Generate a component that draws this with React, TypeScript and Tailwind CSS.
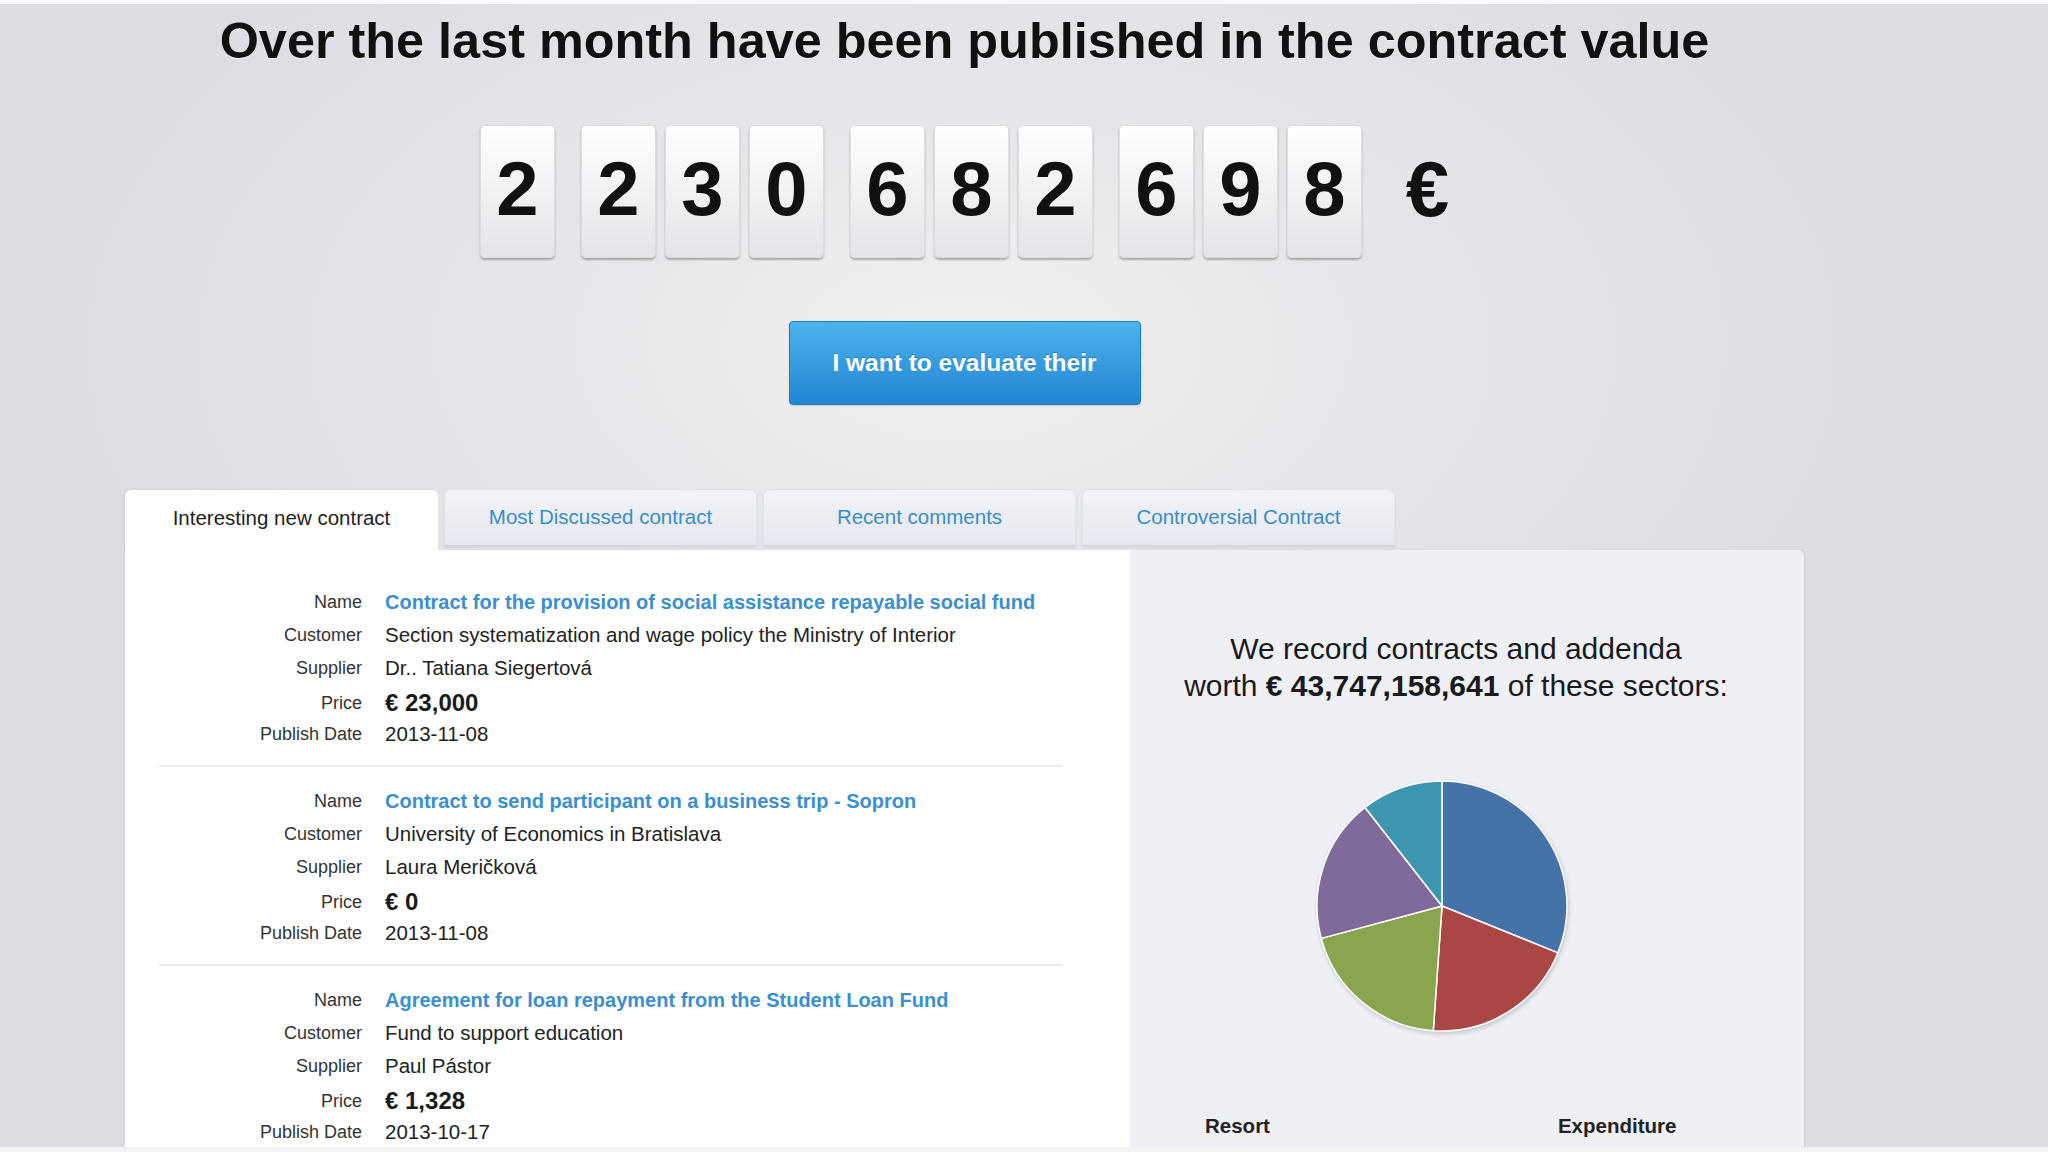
import React from "react";

const digitGroups = [["2"], ["2", "3", "0"], ["6", "8", "2"], ["6", "9", "8"]];

type Contract = {
  name: string;
  customer: string;
  supplier: string;
  price: string;
  date: string;
};

const contracts: Contract[] = [
  {
    name: "Contract for the provision of social assistance repayable social fund",
    customer: "Section systematization and wage policy the Ministry of Interior",
    supplier: "Dr.. Tatiana Siegertová",
    price: "€ 23,000",
    date: "2013-11-08",
  },
  {
    name: "Contract to send participant on a business trip - Sopron",
    customer: "University of Economics in Bratislava",
    supplier: "Laura Meričková",
    price: "€ 0",
    date: "2013-11-08",
  },
  {
    name: "Agreement for loan repayment from the Student Loan Fund",
    customer: "Fund to support education",
    supplier: "Paul Pástor",
    price: "€ 1,328",
    date: "2013-10-17",
  },
];

const slices = [
  { from: 0, to: 112, color: "#4572A7" },
  { from: 112, to: 184, color: "#AA4643" },
  { from: 184, to: 255, color: "#89A54E" },
  { from: 255, to: 322, color: "#80699B" },
  { from: 322, to: 360, color: "#3D96AE" },
];

function Pie() {
  const cx = 130;
  const cy = 130;
  const r = 125;
  const pt = (deg: number) => {
    const a = (deg * Math.PI) / 180;
    return [cx + r * Math.sin(a), cy - r * Math.cos(a)];
  };
  return (
    <svg width="260" height="260" viewBox="0 0 260 260" className="drop-shadow-[1px_2px_2px_rgba(0,0,0,0.18)]">
      {slices.map((s, i) => {
        const [x1, y1] = pt(s.from);
        const [x2, y2] = pt(s.to);
        const large = s.to - s.from > 180 ? 1 : 0;
        return (
          <path
            key={i}
            d={`M${cx} ${cy} L${x1} ${y1} A${r} ${r} 0 ${large} 1 ${x2} ${y2} Z`}
            fill={s.color}
            stroke="#ffffff"
            strokeWidth="1.5"
            strokeLinejoin="round"
          />
        );
      })}
    </svg>
  );
}

function Row({ label, children }: { label: string; children: React.ReactNode }) {
  return (
    <div className="grid grid-cols-[203px_1fr] gap-x-[23px] h-[33px] items-center">
      <div className="text-right text-[18px] text-[#333]">{label}</div>
      <div className="text-[20.5px] text-[#222] whitespace-nowrap">{children}</div>
    </div>
  );
}

export default function App() {
  return (
    <div className="w-[2048px] h-[1152px] overflow-hidden flex flex-col font-['Liberation_Sans',Arial,Helvetica,sans-serif]">
      <div className="h-[4px] bg-[#f9f9fa] shrink-0" />
      <div className="h-[1143px] shrink-0 overflow-hidden bg-[radial-gradient(ellipse_900px_520px_at_47%_30%,#f1f1f3_0%,#e6e6ea_45%,#dddee4_100%)]">
        <div className="ml-[125px] w-[1679px] flex flex-col">
          <h1 className="mt-[12px] text-center text-[50.4px] leading-[50px] font-bold text-[#111] [text-shadow:0_1px_0_rgba(255,255,255,0.6)]">
            Over the last month have been published in the contract value
          </h1>

          <div className="mt-[59px] flex justify-center items-center gap-[26px]">
            {digitGroups.map((g, gi) => (
              <div key={gi} className="flex gap-[9px]">
                {g.map((d, di) => (
                  <div
                    key={di}
                    className="w-[75px] h-[133px] pb-[5px] rounded-[5px] bg-gradient-to-b from-[#ffffff] to-[#e3e4e8] border border-[#dcdde1] shadow-[0_2px_2px_rgba(0,0,0,0.28)] flex items-center justify-center text-[76px] font-bold text-[#111] leading-none"
                  >
                    {d}
                  </div>
                ))}
              </div>
            ))}
            <div className="ml-[18px] pb-[5px] text-[78px] font-bold text-[#111] leading-none">€</div>
          </div>

          <div className="mt-[63px] flex justify-center">
            <button className="w-[352px] h-[84px] rounded-[4px] border border-[#1f7ec2] bg-gradient-to-b from-[#4cb3eb] to-[#1f85d3] text-white text-[24.5px] font-bold [text-shadow:0_-1px_0_rgba(0,0,0,0.25)] shadow-[0_1px_2px_rgba(0,0,0,0.15)]">
              I want to evaluate their
            </button>
          </div>

          <div className="mt-[85px] flex items-start gap-[6px] h-[60px]">
            <div className="w-[313px] h-[60px] rounded-t-[6px] bg-white shadow-[-1px_-1px_2px_rgba(0,0,0,0.06)] flex items-center justify-center text-[20.5px] text-[#222] pb-[4px]">
              Interesting new contract
            </div>
            {["Most Discussed contract", "Recent comments", "Controversial Contract"].map((t) => (
              <div
                key={t}
                className="w-[313px] h-[56px] -mt-[1px] rounded-t-[7px] bg-gradient-to-b from-[#f1f3f7] to-[#e5e8ef] border-x border-t border-[#e2e4ea] shadow-[0_3px_3px_rgba(0,0,0,0.07)] flex items-center justify-center text-[20.5px] text-[#3a8dc8]"
              >
                {t}
              </div>
            ))}
          </div>

          <div className="flex h-[597px]">
            <div className="w-[1005px] bg-white shadow-[-1px_0_2px_rgba(0,0,0,0.05)] pt-[18px] px-[34px]">
              {contracts.map((c, i) => (
                <div key={i} className="w-[903px] pt-[18px] pb-[14px] border-b-2 border-[#ececee]">
                  <Row label="Name">
                    <span className="font-bold text-[20px] text-[#3b8ed0]">{c.name}</span>
                  </Row>
                  <Row label="Customer">{c.customer}</Row>
                  <Row label="Supplier">{c.supplier}</Row>
                  <Row label="Price">
                    <span className="font-bold text-[24px] text-[#1a1a1a]">{c.price}</span>
                  </Row>
                  <Row label="Publish Date">{c.date}</Row>
                </div>
              ))}
            </div>
            <div className="w-[674px] bg-[#eff0f5] rounded-tr-[6px] shadow-[1px_0_2px_rgba(0,0,0,0.08)] flex flex-col">
              <div className="pt-[80px] pr-[22px] text-center text-[30px] leading-[37px] text-[#1a1a1a]">
                <div>We record contracts and addenda</div>
                <div>
                  worth <span className="font-bold">€ 43,747,158,641</span> of these sectors:
                </div>
              </div>
              <div className="mt-[72px] ml-[182px]">
                <Pie />
              </div>
              <div className="mt-[78px] flex text-[20.5px] font-bold text-[#222] leading-[24px]">
                <span className="ml-[75px]">Resort</span>
                <span className="ml-[288px]">Expenditure</span>
              </div>
            </div>
          </div>
        </div>
      </div>
      <div className="h-[5px] bg-[#f3f3f5] shrink-0" />
    </div>
  );
}
